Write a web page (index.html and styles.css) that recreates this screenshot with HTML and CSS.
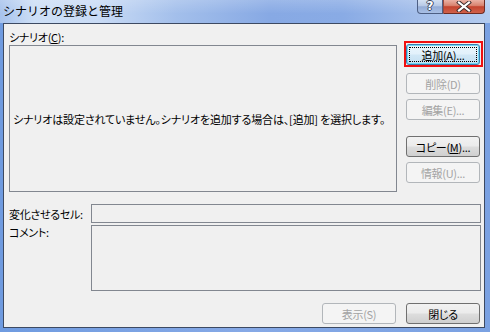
FILE: index.html
```html
<!DOCTYPE html>
<html lang="ja">
<head>
<meta charset="utf-8">
<title>シナリオの登録と管理</title>
<link rel="stylesheet" href="styles.css">
</head>
<body>
<div class="window">
  <div class="titlebar">
    <span class="title">シナリオの登録と管理</span>
    <div class="caption-btns">
      <span class="cap help">?</span>
      <span class="cap close"><svg width="16" height="11" viewBox="0 0 16 11"><path d="M3 1.5 L13 9.5 M13 1.5 L3 9.5" stroke="#3a2a2a" stroke-width="4" stroke-linecap="square"/><path d="M3 1.5 L13 9.5 M13 1.5 L3 9.5" stroke="#ffffff" stroke-width="2.2" stroke-linecap="square"/></svg></span>
    </div>
  </div>
  <div class="frame">
    <div class="client">
      <div class="top">
        <div class="listcol">
          <div class="label">シナリオ(<u>C</u>):</div>
          <div class="listbox"><span class="msg">シナリオは設定されていません。シナリオを追加する場合は、[追加] を選択します。</span></div>
        </div>
        <div class="btncol">
          <div class="btn default focus hl b1">追加(A)...</div>
          <div class="btn disabled b2">削除(D)</div>
          <div class="btn disabled b3">編集(E)...</div>
          <div class="btn b4">コピー(<u>M</u>)...</div>
          <div class="btn disabled b5">情報(U)...</div>
        </div>
      </div>
      <div class="fields">
        <div class="row row-cell">
          <span class="flabel">変化させるセル:</span>
          <div class="input"></div>
        </div>
        <div class="row row-comment">
          <span class="flabel">コメント:</span>
          <div class="textarea"></div>
        </div>
      </div>
      <div class="footer">
        <div class="btn disabled">表示(S)</div>
        <div class="btn">閉じる</div>
      </div>
    </div>
  </div>
</div>
</body>
</html>
```
FILE: styles.css
```css
html, body {
  margin: 0;
  padding: 0;
}
body {
  width: 490px;
  height: 332px;
  overflow: hidden;
  font-family: "Noto Sans CJK JP", "Noto Sans", sans-serif;
  font-size: 12px;
  color: #000;
}
.window {
  width: 490px;
  height: 332px;
  display: flex;
  flex-direction: column;
  background: linear-gradient(to right, #6f9be0 0%, #86a9e6 50%, #7aa1e2 100%);
}
.titlebar {
  height: 23px;
  flex: none;
  display: flex;
  justify-content: space-between;
  align-items: flex-start;
  background:
    linear-gradient(to bottom, rgba(255,255,255,0.18), rgba(255,255,255,0) 60%),
    linear-gradient(to right, #a7c2ec 0%, #cddff6 7%, #c9dbf5 20%, #a3bfeb 36%, #87a9e4 55%, #89abe5 70%, #a2bdea 85%, #b3cbef 100%);
}
.title {
  padding-left: 3px;
  line-height: 22px;
  font-size: 12px;
  color: #000;
}
.caption-btns {
  display: flex;
  margin-right: 5px;
}
.cap {
  box-sizing: border-box;
  height: 14px;
  display: flex;
  align-items: center;
  justify-content: center;
}
.help {
  width: 26px;
  border: 1px solid #4d5f84;
  border-top: 0;
  border-radius: 0 0 0 4px;
  background: linear-gradient(to bottom, #d3e0f2 0%, #b7c9e6 45%, #94acd6 52%, #a9c0e6 100%);
  color: #fff;
  font-family: "DejaVu Sans", sans-serif;
  font-weight: bold;
  font-size: 12px;
  line-height: 13px;
  text-shadow: 1px 0 0 #3b4660, -1px 0 0 #3b4660, 0 1px 0 #3b4660, 0 -1px 0 #3b4660;
}
.close {
  width: 42px;
  border: 1px solid #6e2b22;
  border-top: 0;
  border-left: 1px solid #9c4a3e;
  border-radius: 0 0 4px 0;
  background: linear-gradient(to bottom, #eab1a4 0%, #d98470 42%, #c4442f 52%, #d0614a 100%);
}
.frame {
  flex: 1;
  display: flex;
  padding: 0 5px 4px 3px;
}
.client {
  flex: 1;
  box-sizing: border-box;
  border: 1px solid #3d4a62;
  background: #f0f0f0;
  display: flex;
  flex-direction: column;
  font-size: 11px;
  letter-spacing: -0.3px;
  font-feature-settings: "palt";
}
.top {
  display: flex;
  padding: 6px 0 0 5px;
}
.listcol {
  width: 388px;
  display: flex;
  flex-direction: column;
}
.label {
  height: 14px;
  line-height: 14px;
  margin-bottom: 1px;
}
.listbox {
  box-sizing: border-box;
  height: 147px;
  border: 1px solid #828790;
  background: #f0f0f0;
  display: flex;
  align-items: center;
  padding: 0 0 0 3px;
}
.msg {
  white-space: nowrap;
  letter-spacing: -0.15px;
}
.btncol {
  margin-left: 9px;
  width: 74px;
  display: flex;
  flex-direction: column;
}
.btn {
  box-sizing: border-box;
  width: 74px;
  height: 21px;
  border: 1px solid #707070;
  border-radius: 3px;
  background: linear-gradient(to bottom, #f2f2f2 0%, #ebebeb 48%, #dddddd 52%, #cfcfcf 100%);
  display: flex;
  align-items: center;
  justify-content: center;
  position: relative;
  line-height: 14px;
}
.btn.disabled {
  border-color: #b2b6ba;
  background: #f4f4f4;
  color: #a3a3a3;
}
.btn.default {
  border-color: #3c7fb1;
  box-shadow: inset 0 0 0 1px #6fd8f6;
  background: linear-gradient(to bottom, #eaf6fd 0%, #e2f1fb 48%, #d2e8f6 52%, #c5e0f2 100%);
}
.btn.focus::after {
  content: "";
  position: absolute;
  top: 2px;
  left: 2px;
  right: 2px;
  bottom: 2px;
  border: 1px dotted #000;
}
.btn.hl::before {
  content: "";
  position: absolute;
  top: -4px;
  left: -3px;
  right: -4px;
  bottom: -3px;
  border: 2px solid #f01010;
}
.b1 { margin-top: 14px; }
.b2 { margin-top: 8px; }
.b3 { margin-top: 5px; }
.b4 { margin-top: 16px; }
.b5 { margin-top: 5px; }
.fields {
  margin-top: 12px;
  padding: 0 3px 0 5px;
  display: flex;
  flex-direction: column;
  gap: 2px;
}
.row {
  display: flex;
}
.row-cell {
  align-items: center;
}
.row-comment {
  align-items: flex-start;
}
.flabel {
  width: 82px;
  flex: none;
  line-height: 14px;
  white-space: nowrap;
}
.input {
  flex: 1;
  box-sizing: border-box;
  height: 19px;
  border: 1px solid #828790;
  background: #f0f0f0;
}
.textarea {
  flex: 1;
  box-sizing: border-box;
  height: 66px;
  border: 1px solid #828790;
  background: #f0f0f0;
}
.footer {
  margin-top: 12px;
  display: flex;
  justify-content: flex-end;
  gap: 10px;
  padding-right: 4px;
}
u {
  text-decoration: underline;
  text-underline-offset: 1px;
}
```
